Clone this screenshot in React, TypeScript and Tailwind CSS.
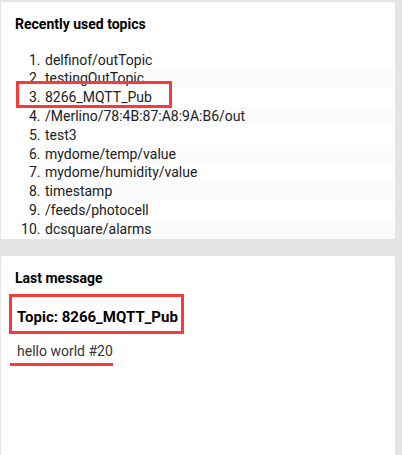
const topics = [
  "delfinof/outTopic",
  "testingOutTopic",
  "8266_MQTT_Pub",
  "/Merlino/78:4B:87:A8:9A:B6/out",
  "test3",
  "mydome/temp/value",
  "mydome/humidity/value",
  "timestamp",
  "/feeds/photocell",
  "dcsquare/alarms",
];

export default function App() {
  return (
    <div
      className="relative h-[455px] w-[402px] overflow-hidden bg-[#e5e5e5] text-[#212121]"
      style={{ fontFamily: "Roboto, 'Noto Sans', sans-serif" }}
    >
      <div className="ml-[1px] flex w-[394px] flex-col gap-[17px] pt-[2px]">
        {/* recent topics */}
        <div className="h-[237px] overflow-hidden rounded-[2px] bg-white pt-[12px]">
          <h2 className="px-[14px] text-[14px] font-bold leading-[20px] text-black">
            Recently used topics
          </h2>
          <ol className="mt-[16.6px] list-decimal pl-[43px] text-[14px] leading-[18.8px]">
            {topics.map((t, i) => (
              <li key={t} className={i % 2 === 1 ? "bg-[#fbfbfb] pl-[1px]" : "pl-[1px]"}>
                {t}
              </li>
            ))}
          </ol>
        </div>

        {/* last message */}
        <div className="h-[220px] rounded-[2px] bg-white px-[14px] pt-[12px]">
          <h2 className="text-[14px] font-bold leading-[20px] text-black">Last message</h2>
          <h3 className="mt-[19px] pl-[2px] text-[15px] font-bold leading-[20px] text-black">
            Topic: 8266_MQTT_Pub
          </h3>
          <p className="mt-[14px] pl-[2px] text-[14px] leading-[20px] text-[#333]">
            hello world #20
          </p>
        </div>
      </div>

      {/* annotation marks */}
      <div className="absolute left-[16px] top-[81px] h-[27px] w-[156px] border-[3px] border-[#f53b3b]" />
      <div className="absolute left-[9px] top-[294px] h-[40px] w-[175px] border-[3px] border-[#f53b3b]" />
      <div className="absolute left-[10px] top-[363px] h-[3px] w-[103px] bg-[#f53b3b]" />
    </div>
  );
}
